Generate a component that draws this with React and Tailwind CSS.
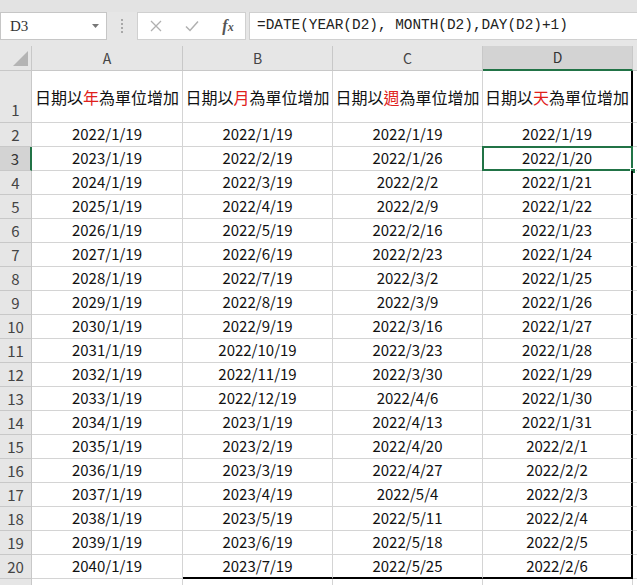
import React from "react";

const colA = ["2022/1/19","2023/1/19","2024/1/19","2025/1/19","2026/1/19","2027/1/19","2028/1/19","2029/1/19","2030/1/19","2031/1/19","2032/1/19","2033/1/19","2034/1/19","2035/1/19","2036/1/19","2037/1/19","2038/1/19","2039/1/19","2040/1/19"];
const colB = ["2022/1/19","2022/2/19","2022/3/19","2022/4/19","2022/5/19","2022/6/19","2022/7/19","2022/8/19","2022/9/19","2022/10/19","2022/11/19","2022/12/19","2023/1/19","2023/2/19","2023/3/19","2023/4/19","2023/5/19","2023/6/19","2023/7/19"];
const colC = ["2022/1/19","2022/1/26","2022/2/2","2022/2/9","2022/2/16","2022/2/23","2022/3/2","2022/3/9","2022/3/16","2022/3/23","2022/3/30","2022/4/6","2022/4/13","2022/4/20","2022/4/27","2022/5/4","2022/5/11","2022/5/18","2022/5/25"];
const colD = ["2022/1/19","2022/1/20","2022/1/21","2022/1/22","2022/1/23","2022/1/24","2022/1/25","2022/1/26","2022/1/27","2022/1/28","2022/1/29","2022/1/30","2022/1/31","2022/2/1","2022/2/2","2022/2/3","2022/2/4","2022/2/5","2022/2/6"];

const font = { fontFamily: '"Noto Sans CJK TC", "Noto Sans", sans-serif' };

function Head({ pre, red, post }) {
  return (
    <span>
      {pre}<span className="text-[#e0201b]">{red}</span>{post}
    </span>
  );
}

export default function App() {
  const headers = [
    ["日期以", "年", "為單位增加"],
    ["日期以", "月", "為單位增加"],
    ["日期以", "週", "為單位增加"],
    ["日期以", "天", "為單位增加"],
  ];
  return (
    <div className="w-[637px] h-[585px] overflow-hidden bg-[#e6e6e6] relative" style={font}>
      {/* formula bar */}
      <div className="h-[12px] bg-[#e3e3e3]" />
      <div className="h-[28px] flex items-stretch bg-[#e6e6e6]">
        <div className="w-[107px] bg-white border border-[#c6c6c6] flex items-center justify-between pl-[9px] pr-[6px]">
          <span className="text-[15px] text-[#333]" style={{ fontFamily: '"Liberation Serif", serif' }}>D3</span>
          <svg width="9" height="6" viewBox="0 0 9 6"><path d="M1 1 L8 1 L4.5 5 Z" fill="#777" /></svg>
        </div>
        <div className="w-[30px] flex flex-col items-center justify-center gap-[2px]">
          <div className="w-[2px] h-[2px] bg-[#a8a8a8]" />
          <div className="w-[2px] h-[2px] bg-[#a8a8a8]" />
          <div className="w-[2px] h-[2px] bg-[#a8a8a8]" />
          <div className="w-[2px] h-[2px] bg-[#a8a8a8]" />
        </div>
        <div className="w-[109px] bg-white border border-[#d0d0d0] flex items-center">
          <div className="w-[34px] flex justify-center ml-[1px]">
            <svg width="12" height="12" viewBox="0 0 12 12"><path d="M1 1 L11 11 M11 1 L1 11" stroke="#b0b0b0" strokeWidth="1.3" /></svg>
          </div>
          <div className="w-[38px] flex justify-center">
            <svg width="14" height="12" viewBox="0 0 14 12"><path d="M1 6.5 L5 10.5 L13 1.5" stroke="#b0b0b0" strokeWidth="1.5" fill="none" /></svg>
          </div>
          <div className="w-[34px] flex justify-center">
            <span className="italic font-bold text-[16px] text-[#555]" style={{ fontFamily: '"Liberation Serif", serif' }}>f<span className="text-[12px]">x</span></span>
          </div>
        </div>
        <div className="w-[3px]" />
        <div className="flex-1 bg-white border-y border-l border-[#d0d0d0] flex items-center pl-[7px]">
          <span className="text-[14.4px] text-[#222]" style={{ fontFamily: '"Liberation Mono", monospace' }}>=DATE(YEAR(D2), MONTH(D2),DAY(D2)+1)</span>
        </div>
      </div>
      <div className="h-[6px]" />

      {/* sheet */}
      <div className="grid grid-cols-[32px_151px_150px_150px_150px_4px] bg-white">
        {/* column header row */}
        <div className="h-[25px] bg-[#e6e6e6] border-r border-b border-[#c8c8c8] flex items-end justify-end pr-[3px] pb-[4px]">
          <svg width="15" height="15" viewBox="0 0 15 15"><path d="M15 0 L15 15 L0 15 Z" fill="#b4b4b4" /></svg>
        </div>
        {["A", "B", "C"].map((c) => (
          <div key={c} className="h-[25px] bg-[#e6e6e6] border-r border-b border-[#c8c8c8] flex items-center justify-center text-[14px] text-[#444]">{c}</div>
        ))}
        <div className="h-[25px] bg-[#d3d3d3] border-r border-[#c8c8c8] border-b-2 border-b-[#217346] flex items-center justify-center text-[14px] text-[#333]">D</div>
        <div className="h-[25px] bg-[#e6e6e6] border-b border-[#c8c8c8]" />

        {/* row 1 */}
        <div className="h-[52px] bg-[#e6e6e6] border-r border-b border-[#c8c8c8] flex items-end justify-center pb-[1px] text-[15px] text-[#444]">1</div>
        {headers.map((h, i) => (
          <div key={i} className={`h-[52px] border-b border-[#d4d4d4] flex items-center justify-center text-[16px] text-[#111] ${i === 3 ? "border-r-2 border-r-black" : "border-r border-r-[#d4d4d4]"}`}>
            <Head pre={h[0]} red={h[1]} post={h[2]} />
          </div>
        ))}
        <div className="h-[52px] border-b border-[#d4d4d4]" />

        {colA.map((a, r) => {
          const rowNum = r + 2;
          const sel = rowNum === 3;
          const last = rowNum === 20;
          const bb = last ? "border-b-2 border-b-black" : "border-b border-b-[#d4d4d4]";
          return (
            <React.Fragment key={rowNum}>
              <div className={`h-[24px] flex items-end justify-center text-[15px] border-b border-b-[#c8c8c8] ${sel ? "bg-[#d3d3d3] text-[#333] border-r-2 border-r-[#217346]" : "bg-[#e6e6e6] text-[#444] border-r border-r-[#c8c8c8]"}`}>{rowNum}</div>
              <div className="h-[24px] flex items-center justify-center text-[15px] text-[#111] border-r border-r-[#d4d4d4] border-b border-b-[#d4d4d4]">{a}</div>
              <div className={`h-[24px] flex items-center justify-center text-[15px] text-[#111] border-r border-r-[#d4d4d4] ${bb}`}>{colB[r]}</div>
              <div className={`h-[24px] flex items-center justify-center text-[15px] text-[#111] border-r border-r-[#d4d4d4] ${bb}`}>{colC[r]}</div>
              <div className={`relative h-[24px] flex items-center justify-center text-[15px] text-[#111] border-r-2 border-r-black ${bb}`}>
                {colD[r]}
                {sel && (
                  <>
                    <div className="absolute left-[-1px] top-[-1px] right-[-2px] bottom-[-1px] border-2 border-[#217346]" />
                    <div className="absolute right-[-5px] bottom-[-4px] w-[6px] h-[6px] bg-[#217346] border border-white" />
                  </>
                )}
              </div>
              <div className="h-[24px] border-b border-b-[#d4d4d4]" />
            </React.Fragment>
          );
        })}
        <div className="h-[24px] bg-[#e6e6e6] border-r border-[#c8c8c8]" />
        <div className="h-[24px] border-r border-[#d4d4d4]" />
        <div className="h-[24px] border-r border-[#d4d4d4]" />
        <div className="h-[24px] border-r border-[#d4d4d4]" />
        <div className="h-[24px] border-r border-[#d4d4d4]" />
        <div className="h-[24px]" />
      </div>
    </div>
  );
}
